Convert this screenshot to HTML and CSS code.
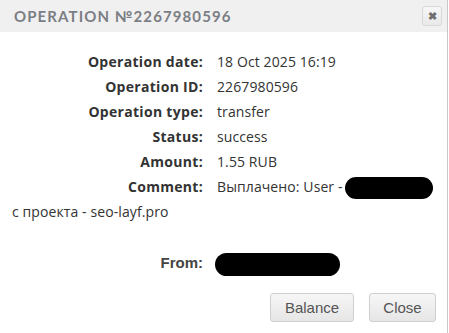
FILE: index.html
```html
<!DOCTYPE html>
<html lang="en">
<head>
    <meta charset="UTF-8">
    <title>Operation</title>
    <link rel="stylesheet" href="styles.css">
</head>
<body>
    <div class="dialog">
        <div class="dialog-header">
            <span class="dialog-title">Operation №2267980596</span>
            <button class="close-x">&#10006;</button>
        </div>
        <div class="dialog-body">
            <div class="row"><span class="label">Operation date:</span><span class="value">18 Oct 2025 16:19</span></div>
            <div class="row"><span class="label">Operation ID:</span><span class="value">2267980596</span></div>
            <div class="row"><span class="label">Operation type:</span><span class="value">transfer</span></div>
            <div class="row"><span class="label">Status:</span><span class="value">success</span></div>
            <div class="row"><span class="label">Amount:</span><span class="value">1.55 RUB</span></div>
            <div class="row"><span class="label">Comment:</span><span class="value">Выплачено: User -<span class="hidden-part blot-comment"></span> с проекта - seo-layf.pro</span></div>
            <div class="row row-from"><span class="label label-from">From:</span><span class="value"><span class="hidden-part blot-from"></span></span></div>
        </div>
        <div class="dialog-buttons">
            <button class="btn btn-balance">Balance</button>
            <button class="btn btn-close">Close</button>
        </div>
    </div>
</body>
</html>
```

FILE: styles.css
```css
body {
    margin: 0;
    background-color: #ffffff;
    font-family: "Open Sans", Arial, sans-serif;
    color: #333333;
}

.dialog {
    width: 447px;
    height: 333px;
    border-right: 1px solid #c8c8c8;
}

.dialog-header {
    height: 32px;
    background-color: #f0f0f0;
    display: flex;
    align-items: center;
    justify-content: space-between;
    padding: 0 5px 0 14px;
}

.dialog-title {
    font-family: Lato, sans-serif;
    font-weight: bold;
    font-size: 15px;
    letter-spacing: 1.1px;
    text-transform: uppercase;
    color: #7b7e84;
}

.close-x {
    width: 20px;
    height: 20px;
    padding: 0;
    border: 1px solid #d8d8d8;
    border-radius: 3px;
    background: linear-gradient(#f7f7f7, #e9e9e9);
    color: #6e6e6e;
    font-size: 11px;
    font-weight: bold;
    line-height: 18px;
    cursor: pointer;
}

.dialog-body {
    padding: 17px 12px 0 12px;
    font-size: 14px;
}

.row {
    line-height: 25px;
}

.label {
    display: inline-block;
    width: 191px;
    text-align: right;
    font-weight: bold;
    letter-spacing: 0.3px;
    color: #333333;
    margin-right: 14px;
}

.value {
    color: #333333;
    letter-spacing: 0.1px;
}

.hidden-part {
    display: inline-block;
    background-color: #000000;
    border-radius: 12px;
    vertical-align: middle;
}

.blot-comment {
    width: 88px;
    height: 22px;
    margin-left: 2px;
}

.blot-from {
    width: 125px;
    height: 23px;
    margin-left: -2px;
}

.row-from {
    margin-top: 26px;
}

.label-from {
    font-family: Arial, "Liberation Sans", sans-serif;
    font-size: 15px;
    letter-spacing: 0;
    color: #444444;
}

.dialog-buttons {
    display: flex;
    justify-content: flex-end;
    gap: 15px;
    padding: 17px 11px 0 0;
}

.btn {
    height: 29px;
    padding: 0;
    border: 1px solid #cfcfcf;
    border-radius: 3px;
    background: linear-gradient(#f6f6f6, #e6e6e6);
    font-family: Arial, "Liberation Sans", sans-serif;
    font-size: 15px;
    color: #555555;
    cursor: pointer;
}

.btn-balance {
    width: 84px;
}

.btn-close {
    width: 67px;
}
```
